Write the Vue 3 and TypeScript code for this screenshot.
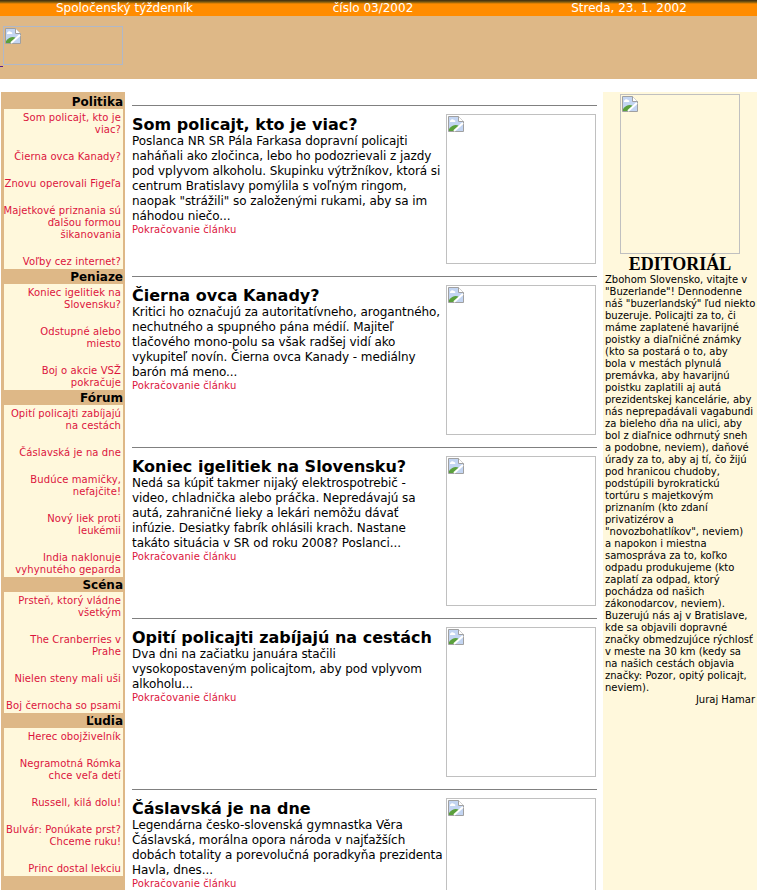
<script setup lang="ts">
interface Section { title: string; items: string[] }
const sections: Section[] = [
  { title: 'Politika', items: ['Som policajt, kto je\nviac?', 'Čierna ovca Kanady?', 'Znovu operovali Figeľa', 'Majetkové priznania sú\nďalšou formou\nšikanovania', 'Voľby cez internet?'] },
  { title: 'Peniaze', items: ['Koniec igelitiek na\nSlovensku?', 'Odstupné alebo\nmiesto', 'Boj o akcie VSŽ\npokračuje'] },
  { title: 'Fórum', items: ['Opití policajti zabíjajú\nna cestách', 'Čáslavská je na dne', 'Budúce mamičky,\nnefajčite!', 'Nový liek proti\nleukémii', 'India naklonuje\nvyhynutého geparda'] },
  { title: 'Scéna', items: ['Prsteň, ktorý vládne\nvšetkým', 'The Cranberries v\nPrahe', 'Nielen steny mali uši', 'Boj černocha so psami'] },
  { title: 'Ľudia', items: ['Herec obojživelník', 'Negramotná Rómka\nchce veľa detí', 'Russell, kilá dolu!', 'Bulvár: Ponúkate prst?\nChceme ruku!', 'Princ dostal lekciu'] },
]
const articles = [
  { title: 'Som policajt, kto je viac?', text: 'Poslanca NR SR Pála Farkasa dopravní policajti naháňali ako zločinca, lebo ho podozrievali z jazdy pod vplyvom alkoholu. Skupinku výtržníkov, ktorá si centrum Bratislavy pomýlila s voľným ringom, naopak "strážili" so založenými rukami, aby sa im náhodou niečo...' },
  { title: 'Čierna ovca Kanady?', text: 'Kritici ho označujú za autoritatívneho, arogantného, nechutného a spupného pána médií. Majiteľ tlačového mono-polu sa však radšej vidí ako vykupiteľ novín. Čierna ovca Kanady - mediálny barón má meno...' },
  { title: 'Koniec igelitiek na Slovensku?', text: 'Nedá sa kúpiť takmer nijaký elektrospotrebič -\nvideo, chladnička alebo práčka. Nepredávajú sa\nautá, zahraničné lieky a lekári nemôžu dávať\ninfúzie. Desiatky fabrík ohlásili krach. Nastane\ntakáto situácia v SR od roku 2008? Poslanci...' },
  { title: 'Opití policajti zabíjajú na cestách', text: 'Dva dni na začiatku januára stačili vysokopostaveným policajtom, aby pod vplyvom alkoholu...' },
  { title: 'Čáslavská je na dne', text: 'Legendárna česko-slovenská gymnastka Věra Čáslavská, morálna opora národa v najťažších dobách totality a porevolučná poradkyňa prezidenta Havla, dnes...' },
]
const editorial = `Zbohom Slovensko, vitajte v
"Buzerlande"! Dennodenne
náš "buzerlandský" ľud niekto
buzeruje. Policajti za to, či
máme zaplatené havarijné
poistky a diaľničné známky
(kto sa postará o to, aby
bola v mestách plynulá
premávka, aby havarijnú
poistku zaplatili aj autá
prezidentskej kancelárie, aby
nás neprepadávali vagabundi
za bieleho dňa na ulici, aby
bol z diaľnice odhrnutý sneh
a podobne, neviem), daňové
úrady za to, aby aj tí, čo žijú
pod hranicou chudoby,
podstúpili byrokratickú
tortúru s majetkovým
priznaním (kto zdaní
privatizérov a
"novozbohatlíkov", neviem)
a napokon i miestna
samospráva za to, koľko
odpadu produkujeme (kto
zaplatí za odpad, ktorý
pochádza od našich
zákonodarcov, neviem).
Buzerujú nás aj v Bratislave,
kde sa objavili dopravné
značky obmedzujúce rýchlosť
v meste na 30 km (kedy sa
na našich cestách objavia
značky: Pozor, opitý policajt,
neviem).`
</script>

<template>
  <div class="page">
    <div class="topbar">
      <span>Spoločenský týždenník</span>
      <span>číslo 03/2002</span>
      <span class="date">Streda, 23. 1. 2002</span>
    </div>
    <div class="banner">
      <a class="logo-link" href="#">
        <span class="broken logo">
          <svg class="bi" viewBox="0 0 16 16" width="16" height="16"><path d="M.5.5h10l5 5v10H.5z" fill="#c3d5f2" stroke="#a0a0a0"/><path d="M10.5.5v5h5" fill="#fff" stroke="#a0a0a0"/><path d="M2 5c1-2 3-2 4-1 1 0 2 1 1 2H2z" fill="#fff"/><path d="M1 15v-2c3-4 7-5 10-3l-5 5z" fill="#5aa03c"/><path d="M6 15l9-8" stroke="#fff" stroke-width="2"/></svg>
        </span>
      </a>
    </div>
    <div class="columns">
      <nav class="left">
        <section v-for="s in sections" :key="s.title">
          <h3>{{ s.title }}</h3>
          <div class="items">
            <a v-for="i in s.items" :key="i" href="#">{{ i }}</a>
          </div>
        </section>
        <div class="left-end"></div>
      </nav>
      <main class="middle">
        <article v-for="a in articles" :key="a.title">
          <hr />
          <div class="art-body">
            <div class="art-text">
              <h2>{{ a.title }}</h2>
              <p>{{ a.text }}</p>
              <a class="more" href="#">Pokračovanie článku</a>
            </div>
            <span class="broken pic">
              <svg class="bi" viewBox="0 0 16 16" width="16" height="16"><path d="M.5.5h10l5 5v10H.5z" fill="#c3d5f2" stroke="#a0a0a0"/><path d="M10.5.5v5h5" fill="#fff" stroke="#a0a0a0"/><path d="M2 5c1-2 3-2 4-1 1 0 2 1 1 2H2z" fill="#fff"/><path d="M1 15v-2c3-4 7-5 10-3l-5 5z" fill="#5aa03c"/><path d="M6 15l9-8" stroke="#fff" stroke-width="2"/></svg>
            </span>
          </div>
        </article>
      </main>
      <aside class="right">
        <span class="broken edpic">
          <svg class="bi" viewBox="0 0 16 16" width="16" height="16"><path d="M.5.5h10l5 5v10H.5z" fill="#c3d5f2" stroke="#a0a0a0"/><path d="M10.5.5v5h5" fill="#fff" stroke="#a0a0a0"/><path d="M2 5c1-2 3-2 4-1 1 0 2 1 1 2H2z" fill="#fff"/><path d="M1 15v-2c3-4 7-5 10-3l-5 5z" fill="#5aa03c"/><path d="M6 15l9-8" stroke="#fff" stroke-width="2"/></svg>
        </span>
        <h1>EDITORIÁL</h1>
        <p>{{ editorial }}</p>
        <div class="sign">Juraj Hamar</div>
      </aside>
    </div>
  </div>
</template>

<style>
html, body { margin: 0; overflow: hidden; background: #fff; height: 890px; }
</style>

<style scoped>
.page { width: 757px; height: 890px; overflow: hidden; font-family: "DejaVu Sans", Verdana, sans-serif; color: #000; }
.topbar { height: 16px; background: linear-gradient(#3a2a10 0, #7a5a10 2px, #ff8c00 4px); color: #fff; font-size: 12px; display: grid; grid-template-columns: 249px 248px 260px; line-height: 17px; text-align: center; }
.date { padding-left: 4px; }
.banner { height: 63px; background: #deb887; position: relative; }
.logo-link { display: block; width: 120px; height: 51px; padding-top: 10px; }
.logo-link::after { content: ""; position: absolute; left: 0; top: 50px; width: 3px; height: 1px; background: #551a8b; }
.broken { display: block; box-sizing: border-box; border: 1px solid #c0c0c0; padding: 1px; }
.bi { display: block; }
.logo { width: 120px; height: 39px; margin-left: 3px; border-color: #b0b8c8; }
.columns { display: flex; align-items: flex-start; margin-top: 13px; }
.left { width: 124px; margin-left: 1px; box-sizing: border-box; border-left: 3px solid #deb887; border-right: 2px solid #deb887; background: #fff8dc; flex: none; }
.left h3 { margin: 0; background: #deb887; font-size: 12px; line-height: 17px; height: 15px; text-align: right; font-weight: bold; }
section:first-child h3 { height: 17px; line-height: 21px; }
.items { padding: 3px 2px 1px 0; display: flex; flex-direction: column; gap: 15px; text-align: right; }
.items a, .more { color: #dc143c; text-decoration: none; font-size: 10px; line-height: 12px; letter-spacing: 0.1px; }
.items a { white-space: pre; margin-left: -4px; }
.left-end { height: 20px; background: #deb887; }
.middle { width: 465px; margin-left: 7px; padding-top: 13px; flex: none; }
article { height: 171px; }
article hr { margin: 0; border: 0; border-top: 1px solid #808080; height: 0; }
.art-body { display: flex; justify-content: space-between; margin-top: 8px; }
.art-text { width: 314px; }
h2 { margin: 0; font-size: 16px; line-height: 22px; height: 20px; font-weight: bold; }
.art-text p { margin: 0; font-size: 12px; line-height: 15px; letter-spacing: -0.08px; white-space: pre-line; }
.more { display: block; }
.pic { width: 150px; height: 150px; flex: none; margin-right: 1px; }
.right { width: 154px; margin-left: 6px; flex: none; background: #fff8dc; height: 798px; box-sizing: border-box; padding: 2px 2px 0 2px; font-size: 10px; line-height: 12px; }
.edpic { width: 120px; height: 160px; margin-left: 15px; }
.right h1 { margin: 0; font-family: "Liberation Serif", serif; font-size: 18px; line-height: 20px; text-align: center; font-weight: bold; }
.right p { margin: 0; white-space: pre; }
.sign { text-align: right; }
</style>
